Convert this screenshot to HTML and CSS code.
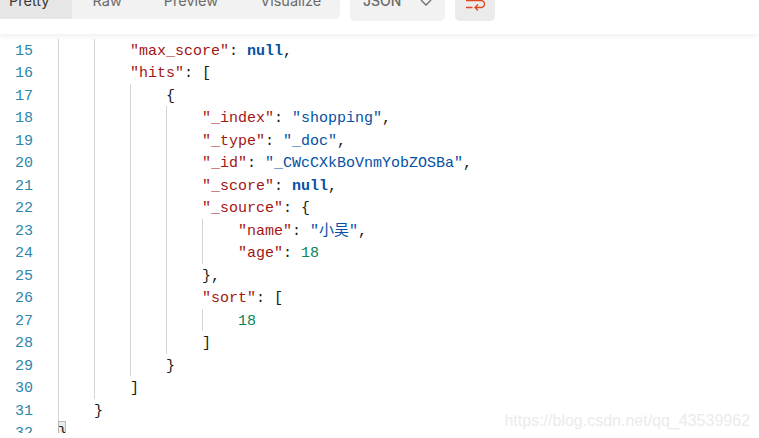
FILE: index.html
```html
<!DOCTYPE html>
<html lang="en">
<head>
<meta charset="utf-8">
<title>Response</title>
<link rel="stylesheet" href="styles.css">
</head>
<body>
<header class="toolbar">
  <nav class="tabs">
    <span class="tab tab-active">Pretty</span>
    <span class="tab">Raw</span>
    <span class="tab">Preview</span>
    <span class="tab">Visualize</span>
  </nav>
  <div class="format">
    <span>JSON</span>
    <svg class="chevron" width="12" height="8" viewBox="0 0 12 8"><path d="M1 1l5 5 5-5" fill="none" stroke="#6b6b6b" stroke-width="1.3"/></svg>
  </div>
  <div class="wrap-btn">
    <svg width="20" height="20" viewBox="0 0 20 20"><path d="M1 7.500H16a3.500 3.500 0 0 1 0 7H10M13 11.500l-3 3 3 3M1 14.500h6.500" fill="none" stroke="#e0481c" stroke-width="1.300"/></svg>
  </div>
</header>
<main class="editor">
  <div class="gutter">
    <div>15</div><div>16</div><div>17</div><div>18</div><div>19</div><div>20</div>
    <div>21</div><div>22</div><div>23</div><div>24</div><div>25</div><div>26</div>
    <div>27</div><div>28</div><div>29</div><div>30</div><div>31</div><div>32</div>
  </div>
  <div class="code">
    <div class="block">
      <div class="block">
        <div class="line"><span class="k">"max_score"</span>: <span class="n">null</span>,</div>
        <div class="line"><span class="k">"hits"</span>: [</div>
        <div class="block">
          <div class="line">{</div>
          <div class="block">
            <div class="line"><span class="k">"_index"</span>: <span class="s">"shopping"</span>,</div>
            <div class="line"><span class="k">"_type"</span>: <span class="s">"_doc"</span>,</div>
            <div class="line"><span class="k">"_id"</span>: <span class="s">"_CWcCXkBoVnmYobZOSBa"</span>,</div>
            <div class="line"><span class="k">"_score"</span>: <span class="n">null</span>,</div>
            <div class="line"><span class="k">"_source"</span>: {</div>
            <div class="block">
              <div class="line"><span class="k">"name"</span>: <span class="s">"小吴"</span>,</div>
              <div class="line"><span class="k">"age"</span>: <span class="d">18</span></div>
            </div>
            <div class="line">},</div>
            <div class="line"><span class="k">"sort"</span>: [</div>
            <div class="block">
              <div class="line"><span class="d">18</span></div>
            </div>
            <div class="line">]</div>
          </div>
          <div class="line">}</div>
        </div>
        <div class="line">]</div>
      </div>
      <div class="line">}</div>
    </div>
    <div class="line"><span class="match">}</span></div>
  </div>
</main>
<div class="watermark">https://blog.csdn.net/qq_43539962</div>
</body>
</html>
```
FILE: styles.css
```css
html, body {
  margin: 0;
  padding: 0;
  height: 100%;
  background: #fff;
  overflow: hidden;
}
body {
  position: relative;
  font-family: "Liberation Mono", "Noto Sans CJK SC", monospace;
}
.toolbar {
  display: flex;
  align-items: flex-start;
  gap: 10px;
  height: 54px;
  margin-top: -20px;
  background: #fff;
  box-shadow: 0 2px 5px rgba(0, 0, 0, 0.07);
  position: relative;
  z-index: 1;
  font-family: Inter, "Open Sans", sans-serif;
  font-size: 14px;
  color: #6b6b6b;
}
.tabs {
  display: flex;
  height: 39px;
  width: 340px;
  background: #f2f2f2;
  border-radius: 0 0 5px 0;
  overflow: hidden;
  font-size: 14.500px;
}
.tab {
  display: flex;
  align-items: center;
  flex: none;
  padding: 2px 21px 0;
}
.tab-active {
  padding: 2px 22px 0 9px;
  background: #e6e6e6;
  color: #3a3a3a;
}
.format {
  display: flex;
  align-items: flex-start;
  gap: 19px;
  height: 41px;
  width: 95px;
  box-sizing: border-box;
  padding: 11px 0 0 13px;
  background: #f2f2f2;
  border-radius: 5px;
  font-weight: 500;
  line-height: 20px;
}
.chevron {
  margin-top: 8px;
}
.wrap-btn {
  display: flex;
  justify-content: center;
  align-items: flex-end;
  width: 40px;
  height: 41px;
  padding-bottom: 8px;
  box-sizing: border-box;
  background: #ebebeb;
  border-radius: 5px;
}
.editor {
  display: flex;
  box-sizing: border-box;
  height: 399px;
  overflow: hidden;
  padding-top: 4.750px;
  font-size: 15px;
  line-height: 26px;
  color: #1a1a1a;
}
.gutter {
  width: 58px;
  flex: none;
  box-sizing: border-box;
  padding-left: 15px;
  color: #2e86ab;
}
.gutter div,
.line {
  height: 22.500px;
}
.code {
  flex: 1;
}
.line {
  white-space: pre;
}
.block {
  border-left: 1px solid #d4d4d4;
  padding-left: 35px;
}
.k { color: #a31515; }
.s { color: #0451a5; }
.n { color: #0451a5; font-weight: 700; }
.d { color: #098658; }
.match {
  display: inline-block;
  vertical-align: top;
  height: 22px;
  width: 8px;
  background: #e8efe6;
  outline: 1px solid #b8b8b8;
  outline-offset: -1px;
}
.watermark {
  position: absolute;
  right: 9px;
  top: 412px;
  font-family: "Liberation Sans", sans-serif;
  font-size: 16px;
  line-height: 18px;
  color: #ebebeb;
}
```
